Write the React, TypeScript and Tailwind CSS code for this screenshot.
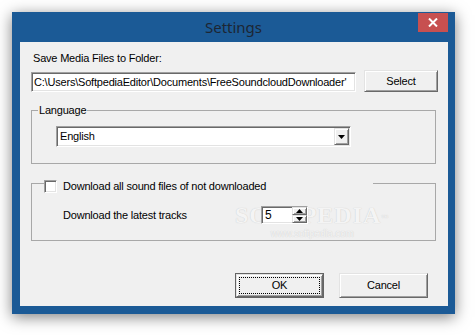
import React from "react";

const sunken =
  "border border-t-[#a0a0a0] border-l-[#a0a0a0] border-b-white border-r-white shadow-[inset_1px_1px_0_#696969,inset_-1px_-1px_0_#e3e3e3]";
const raised =
  "border border-t-[#e3e3e3] border-l-[#e3e3e3] border-b-[#696969] border-r-[#696969] shadow-[inset_1px_1px_0_#ffffff,inset_-1px_-1px_0_#a0a0a0] bg-[#f0f0f0]";

const Arrow: React.FC<{ up?: boolean }> = ({ up }) => (
  <svg width="7" height="4" viewBox="0 0 7 4">
    <path d={up ? "M3.5 0 L7 4 L0 4 Z" : "M0 0 L7 0 L3.5 4 Z"} fill="#000" />
  </svg>
);

const App: React.FC = () => {
  return (
    <div className="h-[335px] w-[475px] bg-white pl-[12px] pt-[12px] font-['Liberation_Sans',Arial,sans-serif]">
      <div className="flex h-[302px] w-[443px] flex-col bg-[#1b5a96] shadow-[0_3px_14px_rgba(0,0,0,0.5)]">
        {/* title bar */}
        <div className="grid h-[30px] grid-cols-[1fr_auto_1fr] items-center">
          <div />
          <div className="font-['Noto_Sans',sans-serif] text-[15px] leading-[18px] text-[#1d2633]">
            Settings
          </div>
          <div className="flex h-full items-start justify-end pr-[7px] pt-[1px]">
            <div className="flex h-[19px] w-[30px] items-center justify-center bg-[#c75050]">
              <svg width="10" height="9" viewBox="0 0 10 9">
                <path d="M1 0.5 L9 8.5 M9 0.5 L1 8.5" stroke="#fff" strokeWidth="2" />
              </svg>
            </div>
          </div>
        </div>

        {/* client */}
        <div className="relative ml-[8px] mr-[7px] flex h-[264px] flex-col bg-[#f0f0f0] pl-[11px] text-[11px] leading-[13px] tracking-[-0.2px] text-black">
          {/* watermark */}
          <div className="pointer-events-none absolute left-[215px] top-[160px] flex flex-col items-center text-[#f4f4f4] [text-shadow:0_0_1px_#c4c4c4]">
            <div className="font-['Liberation_Serif',serif] text-[24px] font-bold leading-[26px] tracking-[1px]">
              SOFTPEDIA<sup className="text-[7px]">™</sup>
            </div>
            <div className="text-[10px] leading-[12px]">www.softpedia.com</div>
          </div>

          <div className="pl-[2px] pt-[10px]">Save Media Files to Folder:</div>

          <div className="mt-[5px] flex items-end gap-[8px]">
            <div className={`flex h-[20px] w-[325px] items-center overflow-hidden whitespace-nowrap bg-white pl-[2px] ${sunken}`}>
              C:\Users\SoftpediaEditor\Documents\FreeSoundcloudDownloader'
            </div>
            <button className={`flex h-[22px] w-[74px] items-center justify-center ${raised}`}>
              Select
            </button>
          </div>

          <fieldset className="mt-[12px] w-[405px] border border-[#a8a8a8] pb-[16px]">
            <legend className="ml-[6px] px-[1px]">Language</legend>
            <div className={`ml-[24px] mt-[9px] flex h-[21px] w-[295px] items-center justify-between bg-white pl-[3px] pr-[1px] ${sunken}`}>
              <span>English</span>
              <div className={`flex h-[17px] w-[15px] items-center justify-center ${raised}`}>
                <Arrow />
              </div>
            </div>
          </fieldset>

          <fieldset className="relative mt-[9px] w-[405px] border border-[#a8a8a8] pb-[16px]">
            <legend className="ml-[12px] w-[329px] pt-[6px]">
              <div className="flex h-[14px] items-center gap-[6px]">
                <div className={`h-[13px] w-[13px] bg-white ${sunken}`} />
                <span>Download all sound files of not downloaded</span>
              </div>
            </legend>
            <div className="mt-[13px] flex h-[18px] items-center pl-[31px]">
              <span className="w-[198px]">Download the latest tracks</span>
              <div className={`relative flex h-[18px] w-[47px] items-stretch bg-white ${sunken}`}>
                <span className="flex flex-1 items-center pl-[3px] text-[12px]">5</span>
                <div className="flex w-[15px] flex-col">
                  <div className={`flex flex-1 items-center justify-center ${raised}`}>
                    <Arrow up />
                  </div>
                  <div className={`flex flex-1 items-center justify-center ${raised}`}>
                    <Arrow />
                  </div>
                </div>
              </div>
            </div>
          </fieldset>

          <div className="mt-[32px] flex justify-end gap-[15px] pr-[20px]">
            <button className="h-[25px] w-[89px] border border-[#646464] p-0">
              <div className={`flex h-full w-full items-center justify-center p-[2px] ${raised}`}>
                <div className="flex h-full w-full items-center justify-center border border-dotted border-black">
                  OK
                </div>
              </div>
            </button>
            <button className={`flex h-[25px] w-[89px] items-center justify-center ${raised}`}>
              Cancel
            </button>
          </div>
        </div>
      </div>
    </div>
  );
};

export default App;
